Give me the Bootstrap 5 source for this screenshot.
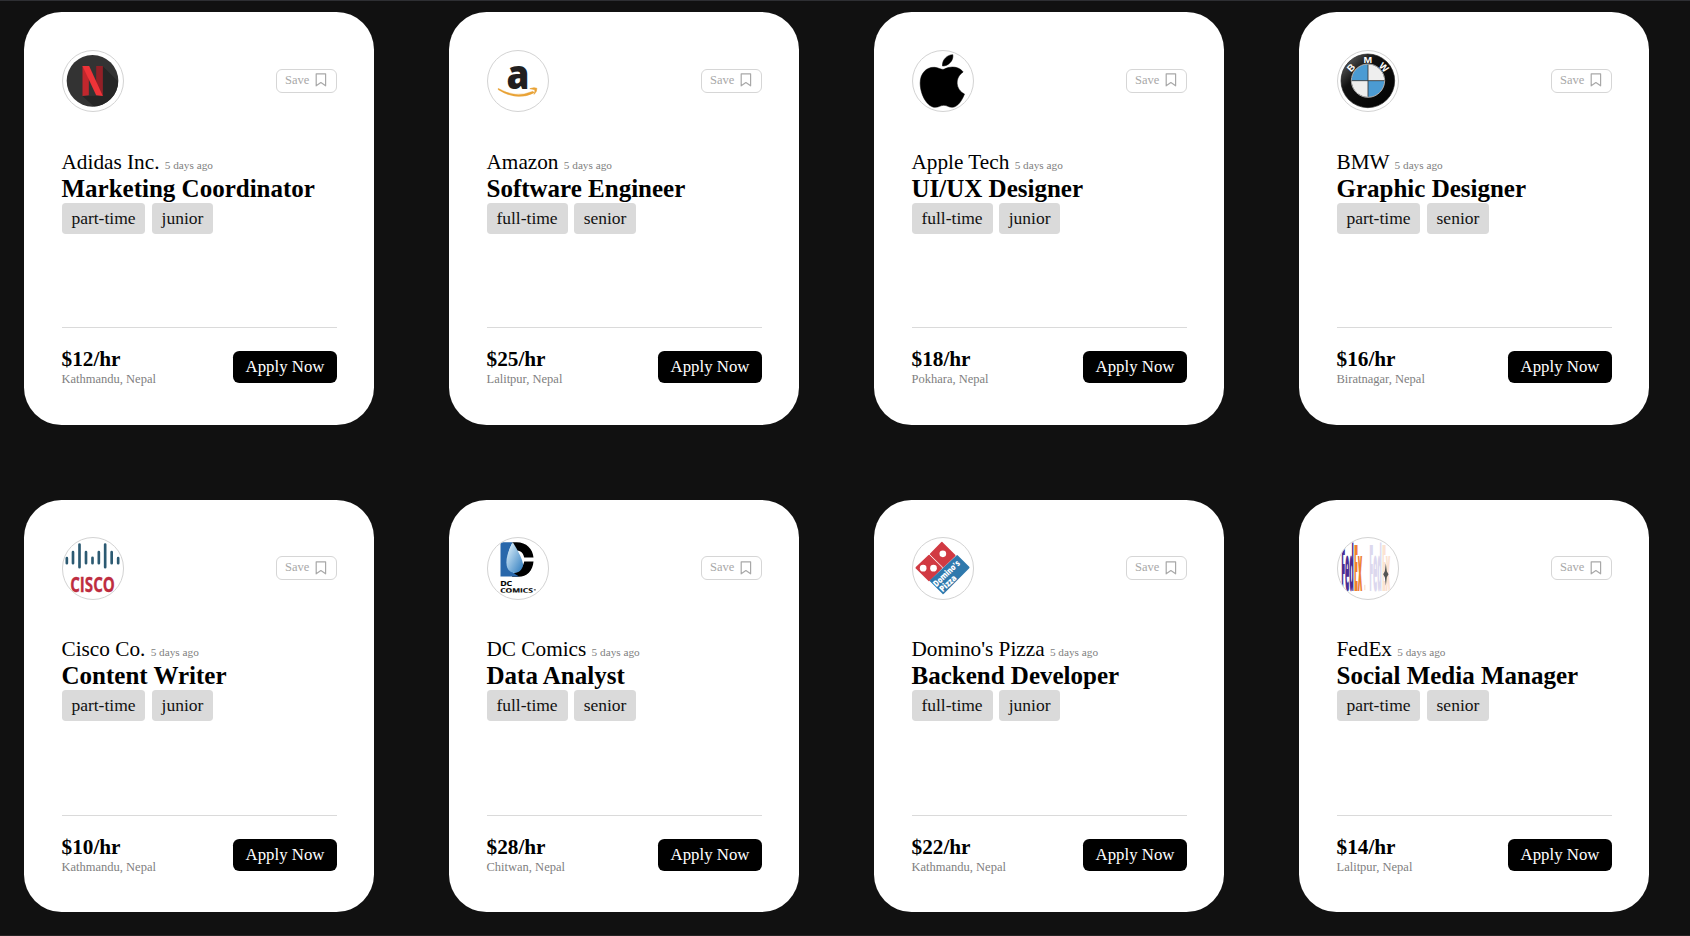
<!DOCTYPE html>
<html lang="en">
<head>
<meta charset="utf-8">
<meta name="viewport" content="width=device-width, initial-scale=1">
<title>Job Cards</title>
<link href="https://cdn.jsdelivr.net/npm/bootstrap@5.3.0/dist/css/bootstrap.min.css" rel="stylesheet">
<style>
body{background:#111;color:#000;font-family:"Liberation Serif",serif;line-height:normal;height:936px;overflow:hidden;border-top:1px solid #2e2f33;border-bottom:1px solid #262324}
.jobs{gap:75px;padding:11px 0 0 24px}
.job{width:350px;height:412.5px;border-radius:37.5px;padding:37.5px}
.logo{width:62.5px;height:62.5px;border:1px solid #d3d3d3;border-radius:50%}
.save{height:24px;width:61px;border:1px solid #d6d6d6;border-radius:6px;color:#a8a8a8;font-size:12.5px;padding:0 0 1.2px 8.5px;gap:5.5px;background:#fff}
.company{font-size:21.25px;line-height:24.5px;margin-top:37.7px}
.ago{font-size:11.25px;line-height:1;color:#808080}
.role{font-size:25px;line-height:28.1px;font-weight:700;margin:.5px 0 0;white-space:nowrap}
.tags{gap:6.25px}
.tag{font-size:17.5px;line-height:20px;height:31px;padding:5px 9.9px;border-radius:3.75px;background:#dadada;color:#111}
.foot{border-top:1px solid #dadada;height:60px;padding-top:19px}
.pay{font-size:21.25px;line-height:25px;font-weight:700}
.place{font-size:12.5px;line-height:15px;color:#808080}
.apply{width:104px;height:32px;border:0;border-radius:6.25px;background:#000;color:#fff;font-size:16.8px;padding:0 0 0 1px}
</style>
</head>
<body>
<svg width="0" height="0" class="position-absolute"><defs>
<symbol id="bookmark" viewBox="0 0 12 14"><path d="M1.200 .8h9.400v12L5.900 9.600 1.200 12.800z" fill="none" stroke="#a8a8a8" stroke-width="1.200" stroke-linejoin="round"/></symbol>
<linearGradient id="drop" x1="0" y1="0" x2="1" y2="1"><stop offset=".2" stop-color="#c3dff2"/><stop offset="1" stop-color="#2b79bd"/></linearGradient>
<linearGradient id="ring" x1="0" y1="0" x2="1" y2="1"><stop offset="0" stop-color="#777"/><stop offset=".35" stop-color="#111"/><stop offset="1" stop-color="#000"/></linearGradient>
<clipPath id="disc"><circle cx="114" cy="107.500" r="77"/></clipPath>
<clipPath id="inner"><circle cx="115.500" cy="107" r="49"/></clipPath>
<clipPath id="comics"><rect x="60" y="176" width="112" height="13"/></clipPath>
</defs></svg>

<main class="jobs d-flex flex-wrap">

<article class="job bg-white d-flex flex-column">
  <div class="d-flex justify-content-between align-items-center">
    <svg class="logo" viewBox="25.500 18 181.500 181.500"><circle cx="114" cy="107.500" r="77.500" fill="#333"/><path clip-path="url(#disc)" d="M145 64l60 60v90h-55l-66-61 62-1z" fill="#262626"/><path d="M84 63h19v88l-19 2z" fill="#c1272d"/><path d="M125 63h20v90l-20-22z" fill="#931f26"/><path d="M84 63h20l41 90-20-2z" fill="#ef3338"/></svg>
    <button class="save d-flex align-items-center">Save <svg width="12" height="14"><use href="#bookmark"/></svg></button>
  </div>
  <div class="company">Adidas Inc. <span class="ago">5 days ago</span></div>
  <h2 class="role">Marketing Coordinator</h2>
  <div class="tags d-flex"><span class="tag">part-time</span><span class="tag">junior</span></div>
  <div class="foot d-flex justify-content-between align-items-center mt-auto"><div><div class="pay">$12/hr</div><div class="place">Kathmandu, Nepal</div></div><button class="apply">Apply Now</button></div>
</article>

<article class="job bg-white d-flex flex-column">
  <div class="d-flex justify-content-between align-items-center">
    <svg class="logo" viewBox="25.500 18 181.500 181.500"><text x="81" y="131" font-family="Open Sans" font-weight="800" font-size="121" textLength="69" lengthAdjust="spacingAndGlyphs" fill="#221f1f">a</text><path d="M56 130q52 31 104 9l5 4q-54 27-109-9z" fill="#e9a336" stroke="#e9a336"/><path d="M151 131q14-5 21-1 1 10-8 18 3-8 2-14-7-2-15-3" fill="#e9a336" stroke="#e9a336" stroke-width="2"/></svg>
    <button class="save d-flex align-items-center">Save <svg width="12" height="14"><use href="#bookmark"/></svg></button>
  </div>
  <div class="company">Amazon <span class="ago">5 days ago</span></div>
  <h2 class="role">Software Engineer</h2>
  <div class="tags d-flex"><span class="tag">full-time</span><span class="tag">senior</span></div>
  <div class="foot d-flex justify-content-between align-items-center mt-auto"><div><div class="pay">$25/hr</div><div class="place">Lalitpur, Nepal</div></div><button class="apply">Apply Now</button></div>
</article>

<article class="job bg-white d-flex flex-column">
  <div class="d-flex justify-content-between align-items-center">
    <svg class="logo" viewBox="25.500 18 181.500 181.500"><path d="M114 63c-2-18 14-34 31-34 3 18-14 35-31 34zM176 81c-12-17-38-19-58-8-8 2-15-5-27-6-25-2-44 18-44 47 0 36 22 73 45 73 11 0 16-6 26-6s14 6 25 6c16 0 31-22 37-40-27-13-30-49-4-66z" stroke="#000" stroke-width="1.500"/></svg>
    <button class="save d-flex align-items-center">Save <svg width="12" height="14"><use href="#bookmark"/></svg></button>
  </div>
  <div class="company">Apple Tech <span class="ago">5 days ago</span></div>
  <h2 class="role">UI/UX Designer</h2>
  <div class="tags d-flex"><span class="tag">full-time</span><span class="tag">junior</span></div>
  <div class="foot d-flex justify-content-between align-items-center mt-auto"><div><div class="pay">$18/hr</div><div class="place">Pokhara, Nepal</div></div><button class="apply">Apply Now</button></div>
</article>

<article class="job bg-white d-flex flex-column">
  <div class="d-flex justify-content-between align-items-center">
    <svg class="logo" viewBox="25.500 18 181.500 181.500"><circle cx="115" cy="107.500" r="80.500" fill="url(#ring)" stroke="#222" stroke-width="2"/><g clip-path="url(#inner)"><path d="M60 50h111v111H60z" fill="#eee"/><path d="M60 50h55.500v57H60zM115.500 107H171v57h-55.500z" fill="#4b9bd3"/></g><circle cx="115.500" cy="107" r="50" fill="none" stroke="#aaa" stroke-width="3"/><path d="M115.500 59v96M67 107h97" stroke="#333" stroke-width="2.500"/><g font-family="Liberation Sans" font-weight="700" font-size="29" fill="#fff" text-anchor="middle"><text transform="translate(72 75) rotate(-46)">B</text><text x="115" y="53" textLength="26" lengthAdjust="spacingAndGlyphs">M</text><text transform="translate(156 74) rotate(44)">W</text></g></svg>
    <button class="save d-flex align-items-center">Save <svg width="12" height="14"><use href="#bookmark"/></svg></button>
  </div>
  <div class="company">BMW <span class="ago">5 days ago</span></div>
  <h2 class="role">Graphic Designer</h2>
  <div class="tags d-flex"><span class="tag">part-time</span><span class="tag">senior</span></div>
  <div class="foot d-flex justify-content-between align-items-center mt-auto"><div><div class="pay">$16/hr</div><div class="place">Biratnagar, Nepal</div></div><button class="apply">Apply Now</button></div>
</article>

<article class="job bg-white d-flex flex-column">
  <div class="d-flex justify-content-between align-items-center">
    <svg class="logo" viewBox="25.500 25.500 181.500 181.500"><path d="M37 86v15M55.500 68v33M75 45v68M94.500 68v33M114 85v16M133 68v33M152 45v68M171.500 68v33M191 86v15" stroke="#2c5a72" stroke-width="8" stroke-linecap="round"/><text x="47" y="186" font-family="Open Sans" font-weight="700" font-size="66" textLength="134" lengthAdjust="spacingAndGlyphs" fill="#be2d40" stroke="#be2d40">CISCO</text></svg>
    <button class="save d-flex align-items-center">Save <svg width="12" height="14"><use href="#bookmark"/></svg></button>
  </div>
  <div class="company">Cisco Co. <span class="ago">5 days ago</span></div>
  <h2 class="role">Content Writer</h2>
  <div class="tags d-flex"><span class="tag">part-time</span><span class="tag">junior</span></div>
  <div class="foot d-flex justify-content-between align-items-center mt-auto"><div><div class="pay">$10/hr</div><div class="place">Kathmandu, Nepal</div></div><button class="apply">Apply Now</button></div>
</article>

<article class="job bg-white d-flex flex-column">
  <div class="d-flex justify-content-between align-items-center">
    <svg class="logo" viewBox="25.500 25.500 181.500 181.500"><path d="M98 38h13c30 0 49 20 51 46h-28c-2-12-10-20-20-20l-12-4zM134 96h28c-2 28-20 46-45 46H97l16-24c11 0 19-9 21-22z"/><path d="M63 38h36q-16 30-14 60 5 30 34 43H63z" fill="#2867ab"/><path d="M100 38q28 45 31 67c-2 18-17 27-29 25-29-5-27-49-2-92z" fill="url(#drop)"/><g font-family="Open Sans" font-weight="700" font-size="22" stroke="#000" stroke-width=".5"><text x="62" y="170" textLength="36" lengthAdjust="spacingAndGlyphs">DC</text><g clip-path="url(#comics)"><text x="62" y="191" textLength="98" lengthAdjust="spacingAndGlyphs">COMICS</text></g></g><path d="M163 181h6" stroke="#333" stroke-width="3"/></svg>
    <button class="save d-flex align-items-center">Save <svg width="12" height="14"><use href="#bookmark"/></svg></button>
  </div>
  <div class="company">DC Comics <span class="ago">5 days ago</span></div>
  <h2 class="role">Data Analyst</h2>
  <div class="tags d-flex"><span class="tag">full-time</span><span class="tag">senior</span></div>
  <div class="foot d-flex justify-content-between align-items-center mt-auto"><div><div class="pay">$28/hr</div><div class="place">Chitwan, Nepal</div></div><button class="apply">Apply Now</button></div>
</article>

<article class="job bg-white d-flex flex-column">
  <div class="d-flex justify-content-between align-items-center">
    <svg class="logo" viewBox="25.500 25.500 181.500 181.500"><g stroke-linejoin="round" stroke-width="6"><path d="M79 74l33-34 38 38-35 34z" fill="#d13a43" stroke="#d13a43"/><path d="M74 79l36 37-36 36-38-37z" fill="#d13a43" stroke="#d13a43"/><path d="M158 80l34 34-76 77-37-37z" fill="#2f79ad" stroke="#2f79ad"/></g><path d="M75 75l40 39" stroke="#f8dfe0" stroke-width="3"/><g fill="#fff"><circle cx="115" cy="73" r="10"/><circle cx="56" cy="116" r="10"/><circle cx="87" cy="116" r="10"/></g><g fill="#fff" font-family="Open Sans" font-weight="800" font-size="26"><text transform="translate(96 173) rotate(-44)" textLength="100" lengthAdjust="spacingAndGlyphs">Domino's</text><text transform="translate(115 189) rotate(-44)" textLength="60" lengthAdjust="spacingAndGlyphs">Pizza</text></g></svg>
    <button class="save d-flex align-items-center">Save <svg width="12" height="14"><use href="#bookmark"/></svg></button>
  </div>
  <div class="company">Domino's Pizza <span class="ago">5 days ago</span></div>
  <h2 class="role">Backend Developer</h2>
  <div class="tags d-flex"><span class="tag">full-time</span><span class="tag">junior</span></div>
  <div class="foot d-flex justify-content-between align-items-center mt-auto"><div><div class="pay">$22/hr</div><div class="place">Kathmandu, Nepal</div></div><button class="apply">Apply Now</button></div>
</article>

<article class="job bg-white d-flex flex-column">
  <div class="d-flex justify-content-between align-items-center">
    <svg class="logo" viewBox="25.500 25.500 181.500 181.500"><g font-family="Open Sans" font-weight="800" font-size="190"><text transform="translate(35 183) scale(.112 1)" fill="#4b2c91">Fed<tspan fill="#ed8032">Ex</tspan></text><text transform="translate(119 183) scale(.112 1)" fill="#dcd8ee">Fed<tspan fill="#fbe3d2">Ex</tspan></text></g><path d="M169 101l3 24 5 9-5 9-3 26-3-26-5-9 5-9z" fill="#555"/><path d="M106 166v16" stroke="#f9dcc4" stroke-width="3"/></svg>
    <button class="save d-flex align-items-center">Save <svg width="12" height="14"><use href="#bookmark"/></svg></button>
  </div>
  <div class="company">FedEx <span class="ago">5 days ago</span></div>
  <h2 class="role">Social Media Manager</h2>
  <div class="tags d-flex"><span class="tag">part-time</span><span class="tag">senior</span></div>
  <div class="foot d-flex justify-content-between align-items-center mt-auto"><div><div class="pay">$14/hr</div><div class="place">Lalitpur, Nepal</div></div><button class="apply">Apply Now</button></div>
</article>

</main>
<script src="https://cdn.jsdelivr.net/npm/bootstrap@5.3.0/dist/js/bootstrap.bundle.min.js"></script>
</body>
</html>
